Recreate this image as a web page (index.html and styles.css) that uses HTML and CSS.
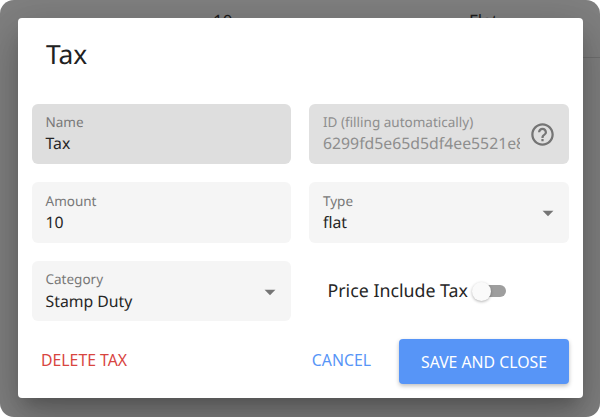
FILE: index.html
```html
<!DOCTYPE html>
<html lang="en">
<head>
<meta charset="utf-8">
<title>Tax</title>
<link rel="stylesheet" href="styles.css">
</head>
<body>
<div class="screen">
  <div class="backdrop-row">
    <span class="behind behind-a">10</span>
    <span class="behind behind-b">Flat</span>
  </div>
  <div class="backdrop-line"></div>
  <main class="dialog">
    <h1 class="title">Tax</h1>
    <div class="form">
      <div class="field disabled">
        <span class="label">Name</span>
        <span class="value">Tax</span>
      </div>
      <div class="field disabled light with-icon">
        <div class="field-text">
          <span class="label">ID (filling automatically)</span>
          <span class="value clipped">6299fd5e65d5df4ee5521e8a</span>
        </div>
        <svg class="help" viewBox="0 0 24 24" width="27" height="27"><path d="M11 18h2v-2h-2v2zm1-16C6.48 2 2 6.48 2 12s4.48 10 10 10 10-4.48 10-10S17.52 2 12 2zm0 18c-4.41 0-8-3.59-8-8s3.59-8 8-8 8 3.59 8 8-3.59 8-8 8zm0-14c-2.21 0-4 1.79-4 4h2c0-1.1.9-2 2-2s2 .9 2 2c0 2-3 1.75-3 5h2c0-2.25 3-2.5 3-5 0-2.21-1.79-4-4-4z"/></svg>
      </div>
      <div class="field">
        <span class="label">Amount</span>
        <span class="value">10</span>
      </div>
      <div class="field with-icon">
        <div class="field-text">
          <span class="label">Type</span>
          <span class="value">flat</span>
        </div>
        <svg class="caret" viewBox="0 0 24 24" width="26" height="26"><path d="M7 10l5 5 5-5z"/></svg>
      </div>
      <div class="field with-icon">
        <div class="field-text">
          <span class="label">Category</span>
          <span class="value">Stamp Duty</span>
        </div>
        <svg class="caret" viewBox="0 0 24 24" width="26" height="26"><path d="M7 10l5 5 5-5z"/></svg>
      </div>
      <div class="toggle-row">
        <span class="toggle-label">Price Include Tax</span>
        <span class="switch"><span class="track"></span><span class="thumb"></span></span>
      </div>
    </div>
    <div class="actions">
      <button class="btn-text danger">DELETE TAX</button>
      <div class="actions-right">
        <button class="btn-text primary">CANCEL</button>
        <button class="btn-solid">SAVE AND CLOSE</button>
      </div>
    </div>
  </main>
</div>
</body>
</html>
```
FILE: styles.css
```css
* { box-sizing: border-box; }
html, body { margin: 0; padding: 0; background: #fff; }
body { width: 600px; height: 417px; overflow: hidden; font-family: "Noto Sans", sans-serif; text-rendering: geometricPrecision; }
.screen {
  position: relative;
  width: 600px;
  height: 417px;
  border-radius: 14px;
  overflow: hidden;
  background: #808080;
  padding: 18px;
}
.backdrop-row { position: absolute; top: 9px; left: 0; width: 100%; height: 9px; overflow: hidden; }
.behind { position: absolute; top: 0; font-size: 17px; line-height: 24px; color: #1c1c1c; }
.behind-a { left: 213px; }
.behind-b { left: 469px; }
.backdrop-line { position: absolute; top: 57px; left: 582px; right: 0; height: 1px; background: #707070; }
.dialog {
  position: relative;
  width: 564.5px;
  height: 380px;
  background: #fff;
  border-radius: 4px;
  box-shadow: 0 11px 15px -7px rgba(0,0,0,.2), 0 24px 38px 3px rgba(0,0,0,.14), 0 9px 46px 8px rgba(0,0,0,.12);
  padding: 20px 13.5px 0 13.5px;
}
.title { margin: 0 0 0 14.5px; font-size: 26.4px; line-height: 32px; font-weight: 400; color: #212121; }
.form {
  display: grid;
  grid-template-columns: 259.5px 260px;
  grid-auto-rows: 60.4px;
  column-gap: 18px;
  row-gap: 18.3px;
  margin-top: 33.5px;
}
.field {
  display: flex;
  flex-direction: column;
  justify-content: flex-start;
  background: #f5f5f5;
  border-radius: 6px;
  padding: 9.4px 14px 0;
}
.field.with-icon { flex-direction: row; align-items: center; justify-content: space-between; padding: 1px 8px 0 14px; }
.field-text { display: flex; flex-direction: column; min-width: 0; }
.disabled { background: #dedede; }
.disabled.light { background: #e0e0e0; }
.label { font-size: 13.5px; line-height: 19px; color: #787878; white-space: nowrap; }
.value { font-size: 15.8px; line-height: 23px; margin-top: 0.2px; color: #262626; white-space: nowrap; }
.light .label, .light .value { color: #8e8e8e; }
.clipped { width: 197px; overflow: hidden; }
.help { fill: #757575; flex: none; margin-right: 5.5px; }
.caret { fill: #757575; flex: none; }
.toggle-row { display: flex; align-items: center; padding-left: 18.5px; }
.toggle-label { font-size: 17.8px; color: #262626; }
.switch { position: relative; width: 34px; height: 24px; margin-left: 4.5px; }
.track { position: absolute; left: 5px; top: 6px; width: 29px; height: 12px; border-radius: 6px; background: #9e9e9e; }
.thumb { position: absolute; left: 0; top: 2.5px; width: 19px; height: 19px; border-radius: 50%; background: #fafafa; box-shadow: 0 1px 3px rgba(0,0,0,.3); }
.actions { display: flex; align-items: center; justify-content: space-between; margin-top: 18px; padding-left: 9.5px; }
.actions-right { display: flex; align-items: center; gap: 28px; }
button { font-family: inherit; border: 0; background: none; padding: 0; letter-spacing: 0; }
.btn-text { font-size: 15.8px; margin-bottom: 4px; }
.danger { color: #d8453f; }
.primary { color: #5795f7; }
.btn-solid { width: 170px; height: 45px; background: #5795f7; color: #fff; border-radius: 4px; box-shadow: 0 2px 4px rgba(0,0,0,.25); font-size: 15.8px; }
```
